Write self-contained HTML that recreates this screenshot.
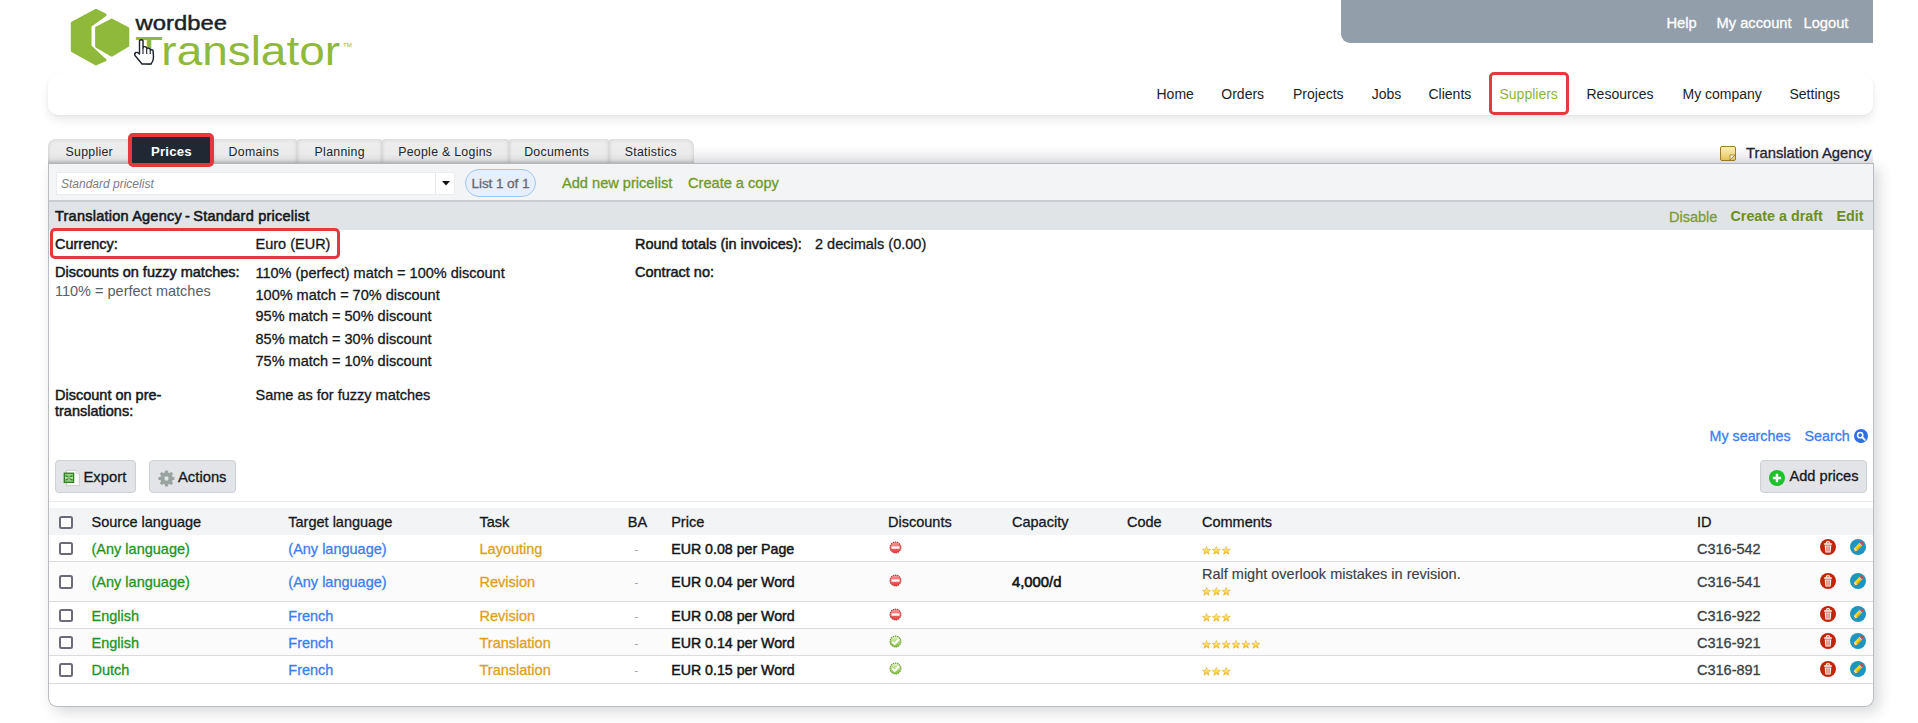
<!DOCTYPE html>
<html><head><meta charset="utf-8"><style>
*{box-sizing:border-box;margin:0;padding:0}
html,body{width:1918px;height:723px;overflow:hidden;background:#fff;font-family:"Liberation Sans",sans-serif;color:#1d222a}
.a{position:absolute}
.t{position:absolute;white-space:nowrap;line-height:1}
.m{-webkit-text-stroke:0.3px currentColor}
.lb{-webkit-text-stroke:0.5px currentColor}
.b{font-weight:bold}
.tab{position:absolute;top:139px;height:24px;border-radius:3px 3px 0 0;background:linear-gradient(#ededed,#ebebeb 60%,#dedfe0);box-shadow:inset 0 0 4px rgba(0,0,0,.13), inset 0 -2px 2px rgba(0,0,0,.08)}
.cb{position:absolute;width:13.5px;height:13.5px;border:2px solid #6b6b7a;border-radius:2.5px;background:#fff}
.rowline{position:absolute;left:49px;width:1824px;height:2px;background:#dedede}
</style></head><body>
<svg class="a" style="left:0;top:0" width="400" height="72" viewBox="0 0 400 72">
<path d="M96 10.3 L105 14.8 L103.3 16.4 L90 25.8 L90 46.4 L103.3 58.6 L105 60 L96 64 L72.3 50.6 L72.3 23 Z" fill="#8fb93b" stroke="#8fb93b" stroke-width="3" stroke-linejoin="round"/>
<path d="M111.7 19.8 L128 28.3 L128 45.7 L111.7 55.3 L96.4 46.3 L96.4 28 Z" fill="#8fb93b" stroke="#8fb93b" stroke-width="2.6" stroke-linejoin="round"/>
<text x="135.5" y="30" font-family="Liberation Sans" font-size="20.5" fill="#1b1f2b" stroke="#1b1f2b" stroke-width="0.45" textLength="91.5" lengthAdjust="spacingAndGlyphs">wordbee</text>
<text x="135" y="64.5" font-family="Liberation Sans" font-size="40.8" fill="#8fb93b" textLength="205" lengthAdjust="spacingAndGlyphs">Translator</text>
<text x="343" y="47" font-family="Liberation Sans" font-size="6" fill="#8fb93b">TM</text>
</svg>
<svg class="a" style="left:132px;top:38px" width="24" height="28" viewBox="0 0 24 28">
<path d="M7.5 2.5 Q9.5 1 11 2.5 L11 10 L11.5 9 Q13 8 14.5 9.5 L15 10.5 Q16.5 9.5 18 11 L18.5 12 Q20 11.2 21 12.5 L21.5 19 Q21.5 23 19 26 L10 26 L3 17.5 Q2 15.5 4 14.5 Q5.5 14 7 15.5 L7.5 16 Z" fill="#fff" stroke="#1b1f2b" stroke-width="1.4" stroke-linejoin="round"/>
<path d="M11 10 L11 16 M14.7 10.5 L14.7 16 M18.2 12 L18.2 16" stroke="#1b1f2b" stroke-width="1.1"/>
</svg>
<div class="a" style="left:1341px;top:0;width:532px;height:43px;background:#929eaa;border-bottom-left-radius:9px"></div>
<div class="t m" style="left:1666.5px;top:16.01px;font-size:14.7px;color:#fff;">Help</div>
<div class="t m" style="left:1716.5px;top:16.01px;font-size:14.7px;color:#fff;">My account</div>
<div class="t m" style="left:1803.5px;top:16.01px;font-size:14.7px;color:#fff;">Logout</div>
<div class="a" style="left:48px;top:74px;width:1825px;height:41px;background:#fff;border-radius:10px;box-shadow:0 6px 10px rgba(0,0,0,0.075), 0 1px 3px rgba(0,0,0,0.05)"></div>
<div class="t " style="left:1156.5px;top:87.30px;font-size:14px;color:#1a1e26;">Home</div>
<div class="t " style="left:1221.3px;top:87.30px;font-size:14px;color:#1a1e26;">Orders</div>
<div class="t " style="left:1293px;top:87.30px;font-size:14px;color:#1a1e26;">Projects</div>
<div class="t " style="left:1371.7px;top:87.30px;font-size:14px;color:#1a1e26;">Jobs</div>
<div class="t " style="left:1428.5px;top:87.30px;font-size:14px;color:#1a1e26;">Clients</div>
<div class="t " style="left:1499.5px;top:87.30px;font-size:14px;color:#8bb53a;">Suppliers</div>
<div class="t " style="left:1586.5px;top:87.30px;font-size:14px;color:#1a1e26;">Resources</div>
<div class="t " style="left:1682.5px;top:87.30px;font-size:14px;color:#1a1e26;">My company</div>
<div class="t " style="left:1789.5px;top:87.30px;font-size:14px;color:#1a1e26;">Settings</div>
<div class="a" style="left:1489px;top:71.5px;width:80px;height:43.5px;border:3.5px solid #e6393e;border-radius:5px"></div>
<div class="a" style="left:48px;top:146px;width:1825px;height:17px;background:linear-gradient(rgba(255,255,255,0),#f6f6f7 40%,#e2e3e5)"></div>
<div class="tab" style="left:48px;width:82px;border-radius:8px 3px 0 0"></div>
<div class="t " style="left:65.5px;top:145.54px;font-size:12.3px;color:#22262e;letter-spacing:0.3px">Supplier</div>
<div class="tab" style="left:213px;width:84px;border-radius:3px 3px 0 0"></div>
<div class="t " style="left:228.6px;top:145.54px;font-size:12.3px;color:#22262e;letter-spacing:0.3px">Domains</div>
<div class="tab" style="left:297px;width:85px;border-radius:3px 3px 0 0"></div>
<div class="t " style="left:314.59999999999997px;top:145.54px;font-size:12.3px;color:#22262e;letter-spacing:0.3px">Planning</div>
<div class="tab" style="left:382px;width:127px;border-radius:3px 3px 0 0"></div>
<div class="t " style="left:398.2px;top:145.54px;font-size:12.3px;color:#22262e;letter-spacing:0.3px">People &amp; Logins</div>
<div class="tab" style="left:509px;width:100px;border-radius:3px 3px 0 0"></div>
<div class="t " style="left:524.2px;top:145.54px;font-size:12.3px;color:#22262e;letter-spacing:0.3px">Documents</div>
<div class="tab" style="left:609px;width:85px;border-radius:3px 8px 0 0"></div>
<div class="t " style="left:624.7px;top:145.54px;font-size:12.3px;color:#22262e;letter-spacing:0.3px">Statistics</div>
<svg class="a" style="left:1719px;top:145px" width="18" height="17" viewBox="0 0 18 17">
<defs><linearGradient id="ng" x1="0" y1="0" x2="0" y2="1"><stop offset="0" stop-color="#fbf0b8"/><stop offset="1" stop-color="#e9c65a"/></linearGradient></defs>
<rect x="1.5" y="1.5" width="15" height="14" rx="1.5" fill="url(#ng)" stroke="#9b7a2a" stroke-width="1"/>
<path d="M11 15 L16 10 L11 10 Z" fill="#fff" stroke="#9b7a2a" stroke-width="0.8"/>
</svg>
<div class="t m" style="left:1746px;top:146.22px;font-size:14.8px;color:#1d2433;">Translation Agency</div>
<div class="a" style="left:48px;top:163px;width:1826px;height:544px;background:#fff;border:1px solid #b9bcc0;border-top-color:#b3b6ba;border-radius:0 0 9px 9px;box-shadow:5px 5px 14px rgba(40,50,60,0.19)"></div>
<div class="a" style="left:49px;top:164px;width:1824px;height:37px;background:#f3f4f6;border-bottom:1px solid #c9ccd0"></div>
<div class="a" style="left:56px;top:172px;width:399px;height:23px;background:#fff;border:1px solid #ececec"></div>
<div class="a" style="left:435px;top:173px;width:1px;height:21px;background:#e6e6e6"></div>
<svg class="a" style="left:441.5px;top:181px" width="8" height="5"><path d="M0 0 L8 0 L4 4.5 Z" fill="#111"/></svg>
<div class="t " style="left:61px;top:178.30px;font-size:12px;color:#7a7d83;font-style:italic">Standard pricelist</div>
<div class="a" style="left:465px;top:169px;width:71px;height:28px;background:#e6effb;border:1px solid #9fc6f2;border-radius:14px"></div>
<div class="t m" style="left:471.5px;top:176.94px;font-size:13.6px;color:#656a72;letter-spacing:-0.1px">List 1 of 1</div>
<div class="t m" style="left:562px;top:176.09px;font-size:14.6px;color:#6e9a25;">Add new pricelist</div>
<div class="t m" style="left:688px;top:176.09px;font-size:14.6px;color:#6e9a25;">Create a copy</div>
<div class="a" style="left:49px;top:201px;width:1824px;height:29px;background:#e1e4e7;border-top:1px solid #c9ccd0"></div>
<div class="t " style="left:55px;top:208.88px;font-size:14.5px;color:#15181d;-webkit-text-stroke:0.55px #15181d;letter-spacing:0.23px">Translation Agency&thinsp;-&thinsp;Standard pricelist</div>
<div class="t m" style="left:1669px;top:209.68px;font-size:14.5px;color:#7a9c3c;">Disable</div>
<div class="t b" style="left:1730.5px;top:208.65px;font-size:14.3px;color:#6b8e23;">Create a draft</div>
<div class="t b" style="left:1836.5px;top:208.65px;font-size:14.3px;color:#6b8e23;">Edit</div>
<div class="a" style="left:49.5px;top:227.5px;width:290.5px;height:31px;border:3.5px solid #e4383e;border-radius:5px"></div>
<div class="t lb" style="left:55px;top:237.38px;font-size:14.5px;color:#15181d;">Currency:</div>
<div class="t m" style="left:255.5px;top:237.38px;font-size:14.5px;color:#15181d;">Euro (EUR)</div>
<div class="t lb" style="left:635px;top:237.08px;font-size:14.5px;color:#15181d;">Round totals (in invoices):</div>
<div class="t m" style="left:815px;top:237.08px;font-size:14.5px;color:#15181d;">2 decimals (0.00)</div>
<div class="t lb" style="left:55px;top:265.18px;font-size:14.5px;color:#15181d;">Discounts on fuzzy matches:</div>
<div class="t " style="left:55px;top:283.98px;font-size:14.5px;color:#5a5e66;">110% = perfect matches</div>
<div class="t lb" style="left:635px;top:265.07px;font-size:14.5px;color:#15181d;">Contract no:</div>
<div class="t m" style="left:255.5px;top:265.68px;font-size:14.5px;color:#15181d;">110% (perfect) match = 100% discount</div>
<div class="t m" style="left:255.5px;top:287.57px;font-size:14.5px;color:#15181d;">100% match = 70% discount</div>
<div class="t m" style="left:255.5px;top:309.38px;font-size:14.5px;color:#15181d;">95% match = 50% discount</div>
<div class="t m" style="left:255.5px;top:332.28px;font-size:14.5px;color:#15181d;">85% match = 30% discount</div>
<div class="t m" style="left:255.5px;top:353.98px;font-size:14.5px;color:#15181d;">75% match = 10% discount</div>
<div class="t lb" style="left:55px;top:388.07px;font-size:14.5px;color:#15181d;">Discount on pre-</div>
<div class="t lb" style="left:55px;top:404.07px;font-size:14.5px;color:#15181d;">translations:</div>
<div class="t m" style="left:255.5px;top:388.07px;font-size:14.5px;color:#15181d;">Same as for fuzzy matches</div>
<div class="t m" style="left:1709.5px;top:429.14px;font-size:14.3px;color:#3d7ef0;">My searches</div>
<div class="t m" style="left:1804.5px;top:429.14px;font-size:14.3px;color:#3d7ef0;">Search</div>
<svg class="a" style="left:1854px;top:429px" width="14" height="14" viewBox="0 0 14 14">
<circle cx="7" cy="7" r="7" fill="#2c6fe6"/><circle cx="6.2" cy="6.2" r="2.6" fill="none" stroke="#fff" stroke-width="1.5"/><path d="M8 8 L10.8 10.8" stroke="#fff" stroke-width="1.8" stroke-linecap="round"/>
</svg>
<div class="a" style="left:55px;top:460px;width:81px;height:33px;background:#e2e4e7;border:1px solid #cdd0d4;border-radius:4px"></div>
<svg class="a" style="left:63px;top:469px" width="18" height="18" viewBox="0 0 18 18">
<path d="M3.5 1.3 L13 1.3 L16.3 4.6 L16.3 16.6 L3.5 16.6 Z" fill="#fff" stroke="#c4c6c8" stroke-width="0.9"/>
<path d="M13 1.3 L13 4.6 L16.3 4.6" fill="#eee" stroke="#d0d0d0" stroke-width="0.6"/>
<rect x="1.3" y="4.2" width="9.3" height="9.2" fill="#8ccf77" stroke="#2f7d25" stroke-width="1.3"/>
<path d="M2.6 6.6 L9.4 11.2 M9.4 6.6 L2.6 11.2" stroke="#2f7d25" stroke-width="1.2"/>
<path d="M2.2 8.9 L9.8 8.9" stroke="#e8f6e0" stroke-width="0.9"/>
</svg>
<div class="t m" style="left:83.5px;top:469.72px;font-size:14.8px;color:#15181d;">Export</div>
<div class="a" style="left:149px;top:460px;width:87px;height:33px;background:#e2e4e7;border:1px solid #cdd0d4;border-radius:4px"></div>
<svg class="a" style="left:157.5px;top:469.5px" width="17" height="17" viewBox="0 0 17 17">
<g fill="#9ba3a1"><rect x="6.9" y="0.6" width="3.2" height="16" rx="0.7" transform="rotate(0 8.5 8.5)"/><rect x="6.9" y="0.6" width="3.2" height="16" rx="0.7" transform="rotate(45 8.5 8.5)"/><rect x="6.9" y="0.6" width="3.2" height="16" rx="0.7" transform="rotate(90 8.5 8.5)"/><rect x="6.9" y="0.6" width="3.2" height="16" rx="0.7" transform="rotate(135 8.5 8.5)"/><circle cx="8.5" cy="8.5" r="6.2"/></g>
<rect x="6.6" y="6.6" width="3.8" height="3.8" rx="0.8" fill="#e2e4e7"/>
</svg>
<div class="t m" style="left:178px;top:469.72px;font-size:14.8px;color:#15181d;">Actions</div>
<div class="a" style="left:1760px;top:460px;width:107px;height:33px;background:#e2e4e7;border:1px solid #cdd0d4;border-radius:4px"></div>
<svg class="a" style="left:1769px;top:470px" width="16" height="16" viewBox="0 0 16 16">
<circle cx="8" cy="8" r="8" fill="#1fc12a"/><path d="M8 3.8 L8 12.2 M3.8 8 L12.2 8" stroke="#fff" stroke-width="2.4"/>
</svg>
<div class="t m" style="left:1789.5px;top:469.39px;font-size:14.6px;color:#15181d;">Add prices</div>
<div class="a" style="left:127.5px;top:133px;width:86px;height:34px;background:#1f2833;border:4px solid #e4383e;border-radius:5px"></div>
<div class="t b" style="left:151px;top:145.28px;font-size:13.2px;color:#fff;letter-spacing:0.2px">Prices</div>
<div class="a" style="left:49px;top:501px;width:1824px;height:1px;background:#e9eaec"></div>
<div class="a" style="left:49px;top:508px;width:1824px;height:27px;background:#f3f4f6"></div>
<div class="cb" style="left:59px;top:515.5px"></div>
<div class="t m" style="left:91.5px;top:514.97px;font-size:14.5px;color:#15181d;">Source language</div>
<div class="t m" style="left:288.3px;top:514.97px;font-size:14.5px;color:#15181d;">Target language</div>
<div class="t m" style="left:479.5px;top:514.97px;font-size:14.5px;color:#15181d;">Task</div>
<div class="t m" style="left:627.8px;top:514.97px;font-size:14.5px;color:#15181d;">BA</div>
<div class="t m" style="left:671.2px;top:514.97px;font-size:14.5px;color:#15181d;">Price</div>
<div class="t m" style="left:888px;top:514.97px;font-size:14.5px;color:#15181d;">Discounts</div>
<div class="t m" style="left:1012px;top:514.97px;font-size:14.5px;color:#15181d;">Capacity</div>
<div class="t m" style="left:1127px;top:514.97px;font-size:14.5px;color:#15181d;">Code</div>
<div class="t m" style="left:1202px;top:514.97px;font-size:14.5px;color:#15181d;">Comments</div>
<div class="t m" style="left:1697px;top:514.97px;font-size:14.5px;color:#15181d;">ID</div>
<div class="a" style="left:49px;top:535px;width:1824px;height:26.5px;background:#ffffff"></div>
<div class="a" style="left:49px;top:560.5px;width:1824px;height:1.5px;background:#dcdcdc"></div>
<div class="cb" style="left:59px;top:541.8px"></div>
<div class="t m" style="left:91.5px;top:541.97px;font-size:14.5px;color:#1e951f;">(Any language)</div>
<div class="t m" style="left:288.3px;top:541.97px;font-size:14.5px;color:#3c7df0;">(Any language)</div>
<div class="t m" style="left:479.5px;top:541.97px;font-size:14.5px;color:#dba11d;">Layouting</div>
<div class="t " style="left:634.5px;top:543.95px;font-size:11px;color:#9a9a9a;">-</div>
<div class="t " style="left:671.2px;top:542.23px;font-size:14.2px;color:#111418;-webkit-text-stroke:0.45px #111418">EUR 0.08 per Page</div>
<svg class="a" style="left:888.5px;top:540.8px" width="13" height="13" viewBox="0 0 13 13">
<defs><linearGradient id="rg0" x1="0" y1="0" x2="0" y2="1"><stop offset="0" stop-color="#ff9a9a"/><stop offset="1" stop-color="#e83a3a"/></linearGradient></defs>
<circle cx="6.5" cy="6.5" r="5.4" fill="url(#rg0)" stroke="#b9373a" stroke-width="1.1" stroke-dasharray="1.5 0.7"/><rect x="2.5" y="5.4" width="8" height="2.3" fill="#fff"/></svg>
<svg class="a" style="left:1201.5px;top:545.8px" width="30" height="9" viewBox="0 0 30 9"><defs><linearGradient id="sg" x1="0" y1="0" x2="0" y2="1"><stop offset="0" stop-color="#fffbd0"/><stop offset="0.5" stop-color="#ffe35a"/><stop offset="1" stop-color="#f2b418"/></linearGradient></defs><g transform="translate(0.00,0)"><path d="M4.50 0.40 L5.56 3.24 L8.59 3.37 L6.21 5.26 L7.03 8.18 L4.50 6.50 L1.97 8.18 L2.79 5.26 L0.41 3.37 L3.44 3.24 Z" fill="url(#sg)" stroke="#dfa22a" stroke-width="0.55" stroke-linejoin="round"/></g><g transform="translate(9.85,0)"><path d="M4.50 0.40 L5.56 3.24 L8.59 3.37 L6.21 5.26 L7.03 8.18 L4.50 6.50 L1.97 8.18 L2.79 5.26 L0.41 3.37 L3.44 3.24 Z" fill="url(#sg)" stroke="#dfa22a" stroke-width="0.55" stroke-linejoin="round"/></g><g transform="translate(19.70,0)"><path d="M4.50 0.40 L5.56 3.24 L8.59 3.37 L6.21 5.26 L7.03 8.18 L4.50 6.50 L1.97 8.18 L2.79 5.26 L0.41 3.37 L3.44 3.24 Z" fill="url(#sg)" stroke="#dfa22a" stroke-width="0.55" stroke-linejoin="round"/></g></svg>
<div class="t m" style="left:1697px;top:541.97px;font-size:14.5px;color:#3a3e46;">C316-542</div>
<svg class="a" style="left:1820px;top:539.2px" width="16" height="16" viewBox="0 0 16 16">
<circle cx="8" cy="8" r="8" fill="#c0260c"/>
<path d="M6.3 4.3 Q6.3 2.6 8 2.6 Q9.7 2.6 9.7 4.3" fill="none" stroke="#fff" stroke-width="1.1"/>
<rect x="4.1" y="4.2" width="7.8" height="1.6" rx="0.6" fill="#fff"/>
<path d="M4.7 6.4 L11.3 6.4 L10.6 13 Q10.5 13.6 9.9 13.6 L6.1 13.6 Q5.5 13.6 5.4 13 Z" fill="#fff"/>
<path d="M6.9 7.3 L7 12.7 M9.1 7.3 L9 12.7" stroke="#c0260c" stroke-width="0.9"/>
</svg>
<svg class="a" style="left:1850px;top:539.2px" width="16" height="16" viewBox="0 0 16 16">
<circle cx="8" cy="8" r="8" fill="#1e95c0"/>
<g transform="rotate(45 8 8)">
<rect x="6.1" y="1.6" width="3.8" height="2.6" rx="1" fill="#e0473a"/>
<rect x="6.1" y="4" width="3.8" height="1.3" fill="#cfd3d6"/>
<path d="M6.1 5.3 L9.9 5.3 L9.9 11 L8 14.2 L6.1 11 Z" fill="#f6d31e"/>
<path d="M8.6 5.3 L9.9 5.3 L9.9 11 L8.6 11 Z" fill="#e7a814"/>
<path d="M6.1 11 L9.9 11 L8 14.2 Z" fill="#f2dfb0"/>
<path d="M7.3 13 L8.7 13 L8 14.3 Z" fill="#222"/>
</g>
</svg>
<div class="a" style="left:49px;top:561.5px;width:1824px;height:40.0px;background:#fbfbfb"></div>
<div class="a" style="left:49px;top:600.5px;width:1824px;height:1.5px;background:#dcdcdc"></div>
<div class="cb" style="left:59px;top:575.0px"></div>
<div class="t m" style="left:91.5px;top:575.17px;font-size:14.5px;color:#1e951f;">(Any language)</div>
<div class="t m" style="left:288.3px;top:575.17px;font-size:14.5px;color:#3c7df0;">(Any language)</div>
<div class="t m" style="left:479.5px;top:575.17px;font-size:14.5px;color:#dba11d;">Revision</div>
<div class="t " style="left:634.5px;top:577.15px;font-size:11px;color:#9a9a9a;">-</div>
<div class="t " style="left:671.2px;top:575.43px;font-size:14.2px;color:#111418;-webkit-text-stroke:0.45px #111418">EUR 0.04 per Word</div>
<svg class="a" style="left:888.5px;top:574.0px" width="13" height="13" viewBox="0 0 13 13">
<defs><linearGradient id="rg1" x1="0" y1="0" x2="0" y2="1"><stop offset="0" stop-color="#ff9a9a"/><stop offset="1" stop-color="#e83a3a"/></linearGradient></defs>
<circle cx="6.5" cy="6.5" r="5.4" fill="url(#rg1)" stroke="#b9373a" stroke-width="1.1" stroke-dasharray="1.5 0.7"/><rect x="2.5" y="5.4" width="8" height="2.3" fill="#fff"/></svg>
<div class="t " style="left:1012px;top:574.92px;font-size:14.8px;color:#111418;-webkit-text-stroke:0.6px #111418">4,000/d</div>
<div class="t " style="left:1202px;top:566.88px;font-size:14.5px;color:#3c4048;-webkit-text-stroke:0.15px #3c4048">Ralf might overlook mistakes in revision.</div>
<svg class="a" style="left:1201.5px;top:586.5px" width="30" height="9" viewBox="0 0 30 9"><defs><linearGradient id="sg" x1="0" y1="0" x2="0" y2="1"><stop offset="0" stop-color="#fffbd0"/><stop offset="0.5" stop-color="#ffe35a"/><stop offset="1" stop-color="#f2b418"/></linearGradient></defs><g transform="translate(0.00,0)"><path d="M4.50 0.40 L5.56 3.24 L8.59 3.37 L6.21 5.26 L7.03 8.18 L4.50 6.50 L1.97 8.18 L2.79 5.26 L0.41 3.37 L3.44 3.24 Z" fill="url(#sg)" stroke="#dfa22a" stroke-width="0.55" stroke-linejoin="round"/></g><g transform="translate(9.85,0)"><path d="M4.50 0.40 L5.56 3.24 L8.59 3.37 L6.21 5.26 L7.03 8.18 L4.50 6.50 L1.97 8.18 L2.79 5.26 L0.41 3.37 L3.44 3.24 Z" fill="url(#sg)" stroke="#dfa22a" stroke-width="0.55" stroke-linejoin="round"/></g><g transform="translate(19.70,0)"><path d="M4.50 0.40 L5.56 3.24 L8.59 3.37 L6.21 5.26 L7.03 8.18 L4.50 6.50 L1.97 8.18 L2.79 5.26 L0.41 3.37 L3.44 3.24 Z" fill="url(#sg)" stroke="#dfa22a" stroke-width="0.55" stroke-linejoin="round"/></g></svg>
<div class="t m" style="left:1697px;top:575.17px;font-size:14.5px;color:#3a3e46;">C316-541</div>
<svg class="a" style="left:1820px;top:572.5px" width="16" height="16" viewBox="0 0 16 16">
<circle cx="8" cy="8" r="8" fill="#c0260c"/>
<path d="M6.3 4.3 Q6.3 2.6 8 2.6 Q9.7 2.6 9.7 4.3" fill="none" stroke="#fff" stroke-width="1.1"/>
<rect x="4.1" y="4.2" width="7.8" height="1.6" rx="0.6" fill="#fff"/>
<path d="M4.7 6.4 L11.3 6.4 L10.6 13 Q10.5 13.6 9.9 13.6 L6.1 13.6 Q5.5 13.6 5.4 13 Z" fill="#fff"/>
<path d="M6.9 7.3 L7 12.7 M9.1 7.3 L9 12.7" stroke="#c0260c" stroke-width="0.9"/>
</svg>
<svg class="a" style="left:1850px;top:572.5px" width="16" height="16" viewBox="0 0 16 16">
<circle cx="8" cy="8" r="8" fill="#1e95c0"/>
<g transform="rotate(45 8 8)">
<rect x="6.1" y="1.6" width="3.8" height="2.6" rx="1" fill="#e0473a"/>
<rect x="6.1" y="4" width="3.8" height="1.3" fill="#cfd3d6"/>
<path d="M6.1 5.3 L9.9 5.3 L9.9 11 L8 14.2 L6.1 11 Z" fill="#f6d31e"/>
<path d="M8.6 5.3 L9.9 5.3 L9.9 11 L8.6 11 Z" fill="#e7a814"/>
<path d="M6.1 11 L9.9 11 L8 14.2 Z" fill="#f2dfb0"/>
<path d="M7.3 13 L8.7 13 L8 14.3 Z" fill="#222"/>
</g>
</svg>
<div class="a" style="left:49px;top:601.5px;width:1824px;height:27.0px;background:#ffffff"></div>
<div class="a" style="left:49px;top:627.5px;width:1824px;height:1.5px;background:#dcdcdc"></div>
<div class="cb" style="left:59px;top:608.5px"></div>
<div class="t m" style="left:91.5px;top:609.07px;font-size:14.5px;color:#1e951f;">English</div>
<div class="t m" style="left:288.3px;top:609.07px;font-size:14.5px;color:#3c7df0;">French</div>
<div class="t m" style="left:479.5px;top:609.07px;font-size:14.5px;color:#dba11d;">Revision</div>
<div class="t " style="left:634.5px;top:611.05px;font-size:11px;color:#9a9a9a;">-</div>
<div class="t " style="left:671.2px;top:609.33px;font-size:14.2px;color:#111418;-webkit-text-stroke:0.45px #111418">EUR 0.08 per Word</div>
<svg class="a" style="left:888.5px;top:607.5px" width="13" height="13" viewBox="0 0 13 13">
<defs><linearGradient id="rg2" x1="0" y1="0" x2="0" y2="1"><stop offset="0" stop-color="#ff9a9a"/><stop offset="1" stop-color="#e83a3a"/></linearGradient></defs>
<circle cx="6.5" cy="6.5" r="5.4" fill="url(#rg2)" stroke="#b9373a" stroke-width="1.1" stroke-dasharray="1.5 0.7"/><rect x="2.5" y="5.4" width="8" height="2.3" fill="#fff"/></svg>
<svg class="a" style="left:1201.5px;top:612.9px" width="30" height="9" viewBox="0 0 30 9"><defs><linearGradient id="sg" x1="0" y1="0" x2="0" y2="1"><stop offset="0" stop-color="#fffbd0"/><stop offset="0.5" stop-color="#ffe35a"/><stop offset="1" stop-color="#f2b418"/></linearGradient></defs><g transform="translate(0.00,0)"><path d="M4.50 0.40 L5.56 3.24 L8.59 3.37 L6.21 5.26 L7.03 8.18 L4.50 6.50 L1.97 8.18 L2.79 5.26 L0.41 3.37 L3.44 3.24 Z" fill="url(#sg)" stroke="#dfa22a" stroke-width="0.55" stroke-linejoin="round"/></g><g transform="translate(9.85,0)"><path d="M4.50 0.40 L5.56 3.24 L8.59 3.37 L6.21 5.26 L7.03 8.18 L4.50 6.50 L1.97 8.18 L2.79 5.26 L0.41 3.37 L3.44 3.24 Z" fill="url(#sg)" stroke="#dfa22a" stroke-width="0.55" stroke-linejoin="round"/></g><g transform="translate(19.70,0)"><path d="M4.50 0.40 L5.56 3.24 L8.59 3.37 L6.21 5.26 L7.03 8.18 L4.50 6.50 L1.97 8.18 L2.79 5.26 L0.41 3.37 L3.44 3.24 Z" fill="url(#sg)" stroke="#dfa22a" stroke-width="0.55" stroke-linejoin="round"/></g></svg>
<div class="t m" style="left:1697px;top:609.07px;font-size:14.5px;color:#3a3e46;">C316-922</div>
<svg class="a" style="left:1820px;top:606.0px" width="16" height="16" viewBox="0 0 16 16">
<circle cx="8" cy="8" r="8" fill="#c0260c"/>
<path d="M6.3 4.3 Q6.3 2.6 8 2.6 Q9.7 2.6 9.7 4.3" fill="none" stroke="#fff" stroke-width="1.1"/>
<rect x="4.1" y="4.2" width="7.8" height="1.6" rx="0.6" fill="#fff"/>
<path d="M4.7 6.4 L11.3 6.4 L10.6 13 Q10.5 13.6 9.9 13.6 L6.1 13.6 Q5.5 13.6 5.4 13 Z" fill="#fff"/>
<path d="M6.9 7.3 L7 12.7 M9.1 7.3 L9 12.7" stroke="#c0260c" stroke-width="0.9"/>
</svg>
<svg class="a" style="left:1850px;top:606.0px" width="16" height="16" viewBox="0 0 16 16">
<circle cx="8" cy="8" r="8" fill="#1e95c0"/>
<g transform="rotate(45 8 8)">
<rect x="6.1" y="1.6" width="3.8" height="2.6" rx="1" fill="#e0473a"/>
<rect x="6.1" y="4" width="3.8" height="1.3" fill="#cfd3d6"/>
<path d="M6.1 5.3 L9.9 5.3 L9.9 11 L8 14.2 L6.1 11 Z" fill="#f6d31e"/>
<path d="M8.6 5.3 L9.9 5.3 L9.9 11 L8.6 11 Z" fill="#e7a814"/>
<path d="M6.1 11 L9.9 11 L8 14.2 Z" fill="#f2dfb0"/>
<path d="M7.3 13 L8.7 13 L8 14.3 Z" fill="#222"/>
</g>
</svg>
<div class="a" style="left:49px;top:628.5px;width:1824px;height:27.5px;background:#fbfbfb"></div>
<div class="a" style="left:49px;top:655px;width:1824px;height:1.5px;background:#dcdcdc"></div>
<div class="cb" style="left:59px;top:635.8px"></div>
<div class="t m" style="left:91.5px;top:636.07px;font-size:14.5px;color:#1e951f;">English</div>
<div class="t m" style="left:288.3px;top:636.07px;font-size:14.5px;color:#3c7df0;">French</div>
<div class="t m" style="left:479.5px;top:636.07px;font-size:14.5px;color:#dba11d;">Translation</div>
<div class="t " style="left:634.5px;top:638.05px;font-size:11px;color:#9a9a9a;">-</div>
<div class="t " style="left:671.2px;top:636.33px;font-size:14.2px;color:#111418;-webkit-text-stroke:0.45px #111418">EUR 0.14 per Word</div>
<svg class="a" style="left:888.5px;top:634.8px" width="13" height="13" viewBox="0 0 13 13">
<defs><linearGradient id="gg3" x1="0" y1="0" x2="0" y2="1"><stop offset="0" stop-color="#e6f4cf"/><stop offset="1" stop-color="#7fbf35"/></linearGradient></defs>
<circle cx="6.5" cy="6.5" r="5.4" fill="url(#gg3)" stroke="#6a9a30" stroke-width="1.1" stroke-dasharray="1.5 0.7"/><path d="M3.3 6.6 L5.6 9 L10 4.2" fill="none" stroke="#fff" stroke-width="2"/></svg>
<svg class="a" style="left:1201.5px;top:639.9px" width="60" height="9" viewBox="0 0 60 9"><defs><linearGradient id="sg" x1="0" y1="0" x2="0" y2="1"><stop offset="0" stop-color="#fffbd0"/><stop offset="0.5" stop-color="#ffe35a"/><stop offset="1" stop-color="#f2b418"/></linearGradient></defs><g transform="translate(0.00,0)"><path d="M4.50 0.40 L5.56 3.24 L8.59 3.37 L6.21 5.26 L7.03 8.18 L4.50 6.50 L1.97 8.18 L2.79 5.26 L0.41 3.37 L3.44 3.24 Z" fill="url(#sg)" stroke="#dfa22a" stroke-width="0.55" stroke-linejoin="round"/></g><g transform="translate(9.85,0)"><path d="M4.50 0.40 L5.56 3.24 L8.59 3.37 L6.21 5.26 L7.03 8.18 L4.50 6.50 L1.97 8.18 L2.79 5.26 L0.41 3.37 L3.44 3.24 Z" fill="url(#sg)" stroke="#dfa22a" stroke-width="0.55" stroke-linejoin="round"/></g><g transform="translate(19.70,0)"><path d="M4.50 0.40 L5.56 3.24 L8.59 3.37 L6.21 5.26 L7.03 8.18 L4.50 6.50 L1.97 8.18 L2.79 5.26 L0.41 3.37 L3.44 3.24 Z" fill="url(#sg)" stroke="#dfa22a" stroke-width="0.55" stroke-linejoin="round"/></g><g transform="translate(29.55,0)"><path d="M4.50 0.40 L5.56 3.24 L8.59 3.37 L6.21 5.26 L7.03 8.18 L4.50 6.50 L1.97 8.18 L2.79 5.26 L0.41 3.37 L3.44 3.24 Z" fill="url(#sg)" stroke="#dfa22a" stroke-width="0.55" stroke-linejoin="round"/></g><g transform="translate(39.40,0)"><path d="M4.50 0.40 L5.56 3.24 L8.59 3.37 L6.21 5.26 L7.03 8.18 L4.50 6.50 L1.97 8.18 L2.79 5.26 L0.41 3.37 L3.44 3.24 Z" fill="url(#sg)" stroke="#dfa22a" stroke-width="0.55" stroke-linejoin="round"/></g><g transform="translate(49.25,0)"><path d="M4.50 0.40 L5.56 3.24 L8.59 3.37 L6.21 5.26 L7.03 8.18 L4.50 6.50 L1.97 8.18 L2.79 5.26 L0.41 3.37 L3.44 3.24 Z" fill="url(#sg)" stroke="#dfa22a" stroke-width="0.55" stroke-linejoin="round"/></g></svg>
<div class="t m" style="left:1697px;top:636.07px;font-size:14.5px;color:#3a3e46;">C316-921</div>
<svg class="a" style="left:1820px;top:633.2px" width="16" height="16" viewBox="0 0 16 16">
<circle cx="8" cy="8" r="8" fill="#c0260c"/>
<path d="M6.3 4.3 Q6.3 2.6 8 2.6 Q9.7 2.6 9.7 4.3" fill="none" stroke="#fff" stroke-width="1.1"/>
<rect x="4.1" y="4.2" width="7.8" height="1.6" rx="0.6" fill="#fff"/>
<path d="M4.7 6.4 L11.3 6.4 L10.6 13 Q10.5 13.6 9.9 13.6 L6.1 13.6 Q5.5 13.6 5.4 13 Z" fill="#fff"/>
<path d="M6.9 7.3 L7 12.7 M9.1 7.3 L9 12.7" stroke="#c0260c" stroke-width="0.9"/>
</svg>
<svg class="a" style="left:1850px;top:633.2px" width="16" height="16" viewBox="0 0 16 16">
<circle cx="8" cy="8" r="8" fill="#1e95c0"/>
<g transform="rotate(45 8 8)">
<rect x="6.1" y="1.6" width="3.8" height="2.6" rx="1" fill="#e0473a"/>
<rect x="6.1" y="4" width="3.8" height="1.3" fill="#cfd3d6"/>
<path d="M6.1 5.3 L9.9 5.3 L9.9 11 L8 14.2 L6.1 11 Z" fill="#f6d31e"/>
<path d="M8.6 5.3 L9.9 5.3 L9.9 11 L8.6 11 Z" fill="#e7a814"/>
<path d="M6.1 11 L9.9 11 L8 14.2 Z" fill="#f2dfb0"/>
<path d="M7.3 13 L8.7 13 L8 14.3 Z" fill="#222"/>
</g>
</svg>
<div class="a" style="left:49px;top:656px;width:1824px;height:27.5px;background:#ffffff"></div>
<div class="a" style="left:49px;top:682.5px;width:1824px;height:1.5px;background:#dcdcdc"></div>
<div class="cb" style="left:59px;top:663.2px"></div>
<div class="t m" style="left:91.5px;top:663.07px;font-size:14.5px;color:#1e951f;">Dutch</div>
<div class="t m" style="left:288.3px;top:663.07px;font-size:14.5px;color:#3c7df0;">French</div>
<div class="t m" style="left:479.5px;top:663.07px;font-size:14.5px;color:#dba11d;">Translation</div>
<div class="t " style="left:634.5px;top:665.05px;font-size:11px;color:#9a9a9a;">-</div>
<div class="t " style="left:671.2px;top:663.33px;font-size:14.2px;color:#111418;-webkit-text-stroke:0.45px #111418">EUR 0.15 per Word</div>
<svg class="a" style="left:888.5px;top:662.2px" width="13" height="13" viewBox="0 0 13 13">
<defs><linearGradient id="gg4" x1="0" y1="0" x2="0" y2="1"><stop offset="0" stop-color="#e6f4cf"/><stop offset="1" stop-color="#7fbf35"/></linearGradient></defs>
<circle cx="6.5" cy="6.5" r="5.4" fill="url(#gg4)" stroke="#6a9a30" stroke-width="1.1" stroke-dasharray="1.5 0.7"/><path d="M3.3 6.6 L5.6 9 L10 4.2" fill="none" stroke="#fff" stroke-width="2"/></svg>
<svg class="a" style="left:1201.5px;top:666.9px" width="30" height="9" viewBox="0 0 30 9"><defs><linearGradient id="sg" x1="0" y1="0" x2="0" y2="1"><stop offset="0" stop-color="#fffbd0"/><stop offset="0.5" stop-color="#ffe35a"/><stop offset="1" stop-color="#f2b418"/></linearGradient></defs><g transform="translate(0.00,0)"><path d="M4.50 0.40 L5.56 3.24 L8.59 3.37 L6.21 5.26 L7.03 8.18 L4.50 6.50 L1.97 8.18 L2.79 5.26 L0.41 3.37 L3.44 3.24 Z" fill="url(#sg)" stroke="#dfa22a" stroke-width="0.55" stroke-linejoin="round"/></g><g transform="translate(9.85,0)"><path d="M4.50 0.40 L5.56 3.24 L8.59 3.37 L6.21 5.26 L7.03 8.18 L4.50 6.50 L1.97 8.18 L2.79 5.26 L0.41 3.37 L3.44 3.24 Z" fill="url(#sg)" stroke="#dfa22a" stroke-width="0.55" stroke-linejoin="round"/></g><g transform="translate(19.70,0)"><path d="M4.50 0.40 L5.56 3.24 L8.59 3.37 L6.21 5.26 L7.03 8.18 L4.50 6.50 L1.97 8.18 L2.79 5.26 L0.41 3.37 L3.44 3.24 Z" fill="url(#sg)" stroke="#dfa22a" stroke-width="0.55" stroke-linejoin="round"/></g></svg>
<div class="t m" style="left:1697px;top:663.07px;font-size:14.5px;color:#3a3e46;">C316-891</div>
<svg class="a" style="left:1820px;top:660.8px" width="16" height="16" viewBox="0 0 16 16">
<circle cx="8" cy="8" r="8" fill="#c0260c"/>
<path d="M6.3 4.3 Q6.3 2.6 8 2.6 Q9.7 2.6 9.7 4.3" fill="none" stroke="#fff" stroke-width="1.1"/>
<rect x="4.1" y="4.2" width="7.8" height="1.6" rx="0.6" fill="#fff"/>
<path d="M4.7 6.4 L11.3 6.4 L10.6 13 Q10.5 13.6 9.9 13.6 L6.1 13.6 Q5.5 13.6 5.4 13 Z" fill="#fff"/>
<path d="M6.9 7.3 L7 12.7 M9.1 7.3 L9 12.7" stroke="#c0260c" stroke-width="0.9"/>
</svg>
<svg class="a" style="left:1850px;top:660.8px" width="16" height="16" viewBox="0 0 16 16">
<circle cx="8" cy="8" r="8" fill="#1e95c0"/>
<g transform="rotate(45 8 8)">
<rect x="6.1" y="1.6" width="3.8" height="2.6" rx="1" fill="#e0473a"/>
<rect x="6.1" y="4" width="3.8" height="1.3" fill="#cfd3d6"/>
<path d="M6.1 5.3 L9.9 5.3 L9.9 11 L8 14.2 L6.1 11 Z" fill="#f6d31e"/>
<path d="M8.6 5.3 L9.9 5.3 L9.9 11 L8.6 11 Z" fill="#e7a814"/>
<path d="M6.1 11 L9.9 11 L8 14.2 Z" fill="#f2dfb0"/>
<path d="M7.3 13 L8.7 13 L8 14.3 Z" fill="#222"/>
</g>
</svg>
</body></html>
